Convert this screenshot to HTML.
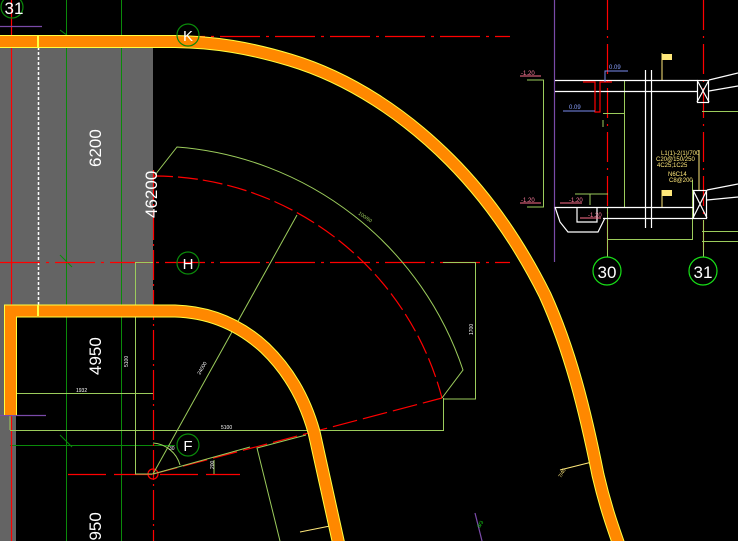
<!DOCTYPE html>
<html><head><meta charset="utf-8"><style>
html,body{margin:0;padding:0;background:#000;width:738px;height:541px;overflow:hidden}
svg{display:block}
text{font-family:"Liberation Sans",sans-serif}
</style></head><body>
<svg width="738" height="541" viewBox="0 0 738 541" xmlns="http://www.w3.org/2000/svg">
<rect width="738" height="541" fill="#000"/>
<rect x="0" y="46" width="153" height="260" fill="#646464"/>
<rect x="0" y="306" width="16" height="235" fill="#646464"/>
<rect x="16" y="316" width="137" height="100" fill="#000"/>
<g stroke="#0a8a0a" stroke-width="1">
<line x1="66.5" y1="0" x2="66.5" y2="541"/>
<line x1="121.5" y1="0" x2="121.5" y2="541"/>
<line x1="10" y1="445.5" x2="175" y2="445.5"/>
<line x1="60" y1="435" x2="72" y2="447"/>
<line x1="60" y1="255" x2="72" y2="267"/>
<line x1="60" y1="30" x2="68" y2="36"/>
</g>
<line x1="38.5" y1="47" x2="38.5" y2="315" stroke="#fff" stroke-width="1.5" stroke-dasharray="3,2"/>
<g stroke="#f00" stroke-width="1.2" fill="none">
<line x1="11.5" y1="0" x2="11.5" y2="541"/>
<line x1="0" y1="36.5" x2="510" y2="36.5" stroke-dasharray="40,6,3,6"/>
<line x1="0" y1="262.5" x2="510" y2="262.5" stroke-dasharray="40,6,3,6"/>
<line x1="68" y1="474.5" x2="240" y2="474.5" stroke-dasharray="38,8"/>
<line x1="153.5" y1="170" x2="153.5" y2="541" stroke-dasharray="30,4,2,4"/>
<path d="M153,176 A298,298 0 0 1 442,398" stroke-dasharray="20,5"/>
<line x1="153" y1="474" x2="442" y2="398" stroke-dasharray="25,6"/>
<circle cx="153" cy="474" r="5"/>
<line x1="607.5" y1="0" x2="607.5" y2="257" stroke-dasharray="30,6,2,6"/>
<line x1="703.5" y1="0" x2="703.5" y2="257" stroke-dasharray="30,6,2,6"/>
</g>
<g stroke="#9ccc5c" stroke-width="1" fill="none">
<path d="M155,175 L177,147 A328,328 0 0 1 463,370 L442,398"/>
<line x1="153" y1="474" x2="297" y2="215"/>
<polyline points="443,262.5 475.5,262.5 475.5,399 443,399"/>
<polyline points="10,430.5 443.5,430.5 443.5,398"/>
<polyline points="153,262.5 135.5,262.5 135.5,474 153,474"/>
<line x1="16" y1="393.5" x2="153" y2="393.5"/>
<line x1="10" y1="415" x2="10" y2="430"/>
<polyline points="306,435 257,448 280,541"/>
<line x1="153" y1="474" x2="250" y2="447"/>
<path d="M153,443 A30,30 0 0 1 180,465"/>
<line x1="214" y1="460" x2="214" y2="474"/>
<polyline points="527,80 543.5,80 543.5,207 527,207"/>
<line x1="624.5" y1="80" x2="624.5" y2="207"/>
<line x1="603" y1="113.5" x2="624" y2="113.5"/>
<line x1="603" y1="120" x2="603" y2="127"/>
<line x1="575" y1="194" x2="608" y2="194"/>
<line x1="590" y1="194" x2="590" y2="205"/>
<polyline points="607,239.5 692.5,239.5 692.5,180"/>
<line x1="702" y1="111.5" x2="738" y2="111.5"/>
<line x1="702" y1="231.5" x2="738" y2="231.5"/>
<line x1="702" y1="241.5" x2="738" y2="241.5"/>
<line x1="607.5" y1="207" x2="607.5" y2="257"/>
<line x1="703.5" y1="220" x2="703.5" y2="257"/>
</g>
<g stroke="#7a4aa8" stroke-width="1.2">
<line x1="0" y1="26.5" x2="42" y2="26.5"/>
<line x1="0" y1="415.5" x2="46" y2="415.5"/>
<line x1="554.5" y1="0" x2="554.5" y2="262"/>
<line x1="475" y1="513" x2="482" y2="541"/>
</g>
<g stroke="#fff" stroke-width="1.2" fill="none">
<line x1="555" y1="80.5" x2="697" y2="80.5"/>
<line x1="555" y1="91.5" x2="697" y2="91.5"/>
<line x1="555" y1="207.5" x2="693" y2="207.5"/>
<line x1="603" y1="218.5" x2="693" y2="218.5"/>
<line x1="645.5" y1="70" x2="645.5" y2="228"/>
<line x1="651.5" y1="70" x2="651.5" y2="228"/>
<rect x="697.5" y="80.5" width="11" height="22"/>
<path d="M697,80 L709,102 M709,80 L697,102"/>
<rect x="693.5" y="190.5" width="13" height="28"/>
<path d="M693,190 L707,218 M707,190 L693,218"/>
<path d="M709,80 L738,73 M709,91 L738,86 M707,190 L738,184 M707,200 L738,197"/>
<path d="M555,207 L560,222 L568,232 L598,232 L605,218"/>
<path d="M577,207 L577,222 L597,222 L597,207"/>
</g>
<g stroke="#ff6e8a" stroke-width="1" fill="none">
<line x1="520" y1="76" x2="541" y2="76"/>
<line x1="520" y1="203" x2="541" y2="203"/>
<line x1="560" y1="203" x2="582" y2="203"/>
<line x1="580" y1="218" x2="601" y2="218"/>
</g>
<g stroke="#f00" stroke-width="1.2" fill="none">
<polyline points="583,82 595,82 595,112 600,112 600,82 612,82"/>
</g>
<g stroke="#7a8cf0" stroke-width="1" fill="none">
<polyline points="605,82 605,71 628,71"/>
<line x1="563" y1="111" x2="595" y2="111"/>
</g>
<g fill="#ff7e9e" font-size="6">
<text x="521" y="75">-1.20</text><text x="521" y="202">-1.20</text>
<text x="569" y="202">-1.20</text><text x="588" y="217">-1.20</text>
</g>
<g fill="#8aa0ff" font-size="6"><text x="609" y="69">0.09</text><text x="569" y="109">0.09</text></g>
<g fill="#ffe87a" font-size="6">
<text x="661" y="155">L1(1)-2(1)/700</text>
<text x="656" y="161">C20@150/250</text>
<text x="657" y="167">4C25;1C25</text>
<text x="668" y="176">N6C14</text>
<text x="669" y="182">C8@200</text>
<rect x="662" y="54" width="10" height="6"/>
<rect x="662" y="190" width="10" height="6"/>
</g>
<g stroke="#ffe87a"><line x1="662" y1="53" x2="662" y2="80"/><line x1="662" y1="190" x2="662" y2="207"/><line x1="699" y1="150" x2="699" y2="190"/>
<line x1="560" y1="470" x2="592" y2="462"/><line x1="300" y1="532" x2="330" y2="526"/></g>
<g fill="none" stroke-linejoin="miter">
<path d="M0,41.5 L175,41.5 C215,42 250,48 290,60 C350,78 405,115 450,160 C490,200 520,245 545,295 C570,350 585,410 598,475 C605,505 612,525 619,545" stroke="#ffff40" stroke-width="13"/>
<path d="M0,41.5 L175,41.5 C215,42 250,48 290,60 C350,78 405,115 450,160 C490,200 520,245 545,295 C570,350 585,410 598,475 C605,505 612,525 619,545" stroke="#ff8800" stroke-width="11"/>
<path d="M10.5,415 L10.5,311 L175,311 C210,312 240,325 265,348 C290,372 305,400 314,432 L339,545" stroke="#ffff40" stroke-width="13"/>
<path d="M10.5,415 L10.5,311 L175,311 C210,312 240,325 265,348 C290,372 305,400 314,432 L339,545" stroke="#ff8800" stroke-width="11"/>
</g>
<rect x="37" y="36" width="2" height="11" fill="#ffff40"/>
<rect x="37" y="305" width="2" height="11" fill="#ffff40"/>
<g fill="none" stroke="#0a8a0a" stroke-width="1.2">
<circle cx="188" cy="35" r="11"/><circle cx="188" cy="263" r="11"/><circle cx="188" cy="445" r="11"/>
<circle cx="12" cy="7" r="11"/>
</g>
<g fill="none" stroke="#18e018" stroke-width="1.2">
<circle cx="607" cy="271" r="14"/><circle cx="703" cy="271" r="14"/>
</g>
<g fill="#fff" font-size="15" text-anchor="middle">
<text x="188" y="41">K</text><text x="188" y="269">H</text><text x="188" y="451">F</text>
<text x="14" y="14" font-size="17">31</text>
<text x="607" y="278" font-size="17">30</text><text x="703" y="278" font-size="17">31</text>
</g>
<g fill="#fff" font-size="17">
<text transform="translate(101,167) rotate(-90)">6200</text>
<text transform="translate(157,218) rotate(-90)">46200</text>
<text transform="translate(101,375) rotate(-90)">4950</text>
<text transform="translate(101,550) rotate(-90)">4950</text>
</g>
<g fill="#fff" font-size="5">
<text x="76" y="392">1932</text>
<text transform="translate(128,367) rotate(-90)">5100</text>
<text x="221" y="429">5100</text>
<text transform="translate(200,375) rotate(-60)">24000</text>
<text transform="translate(473,335) rotate(-90)">1700</text>
<text x="169" y="450">30</text>
<text transform="translate(214,469) rotate(-90)">200</text>
</g>
<text transform="translate(358,214) rotate(35)" fill="#9ccc5c" font-size="5">100/60</text>
<text transform="translate(561,478) rotate(-60)" fill="#ffe87a" font-size="5">7/40</text>
<text transform="translate(480,528) rotate(-60)" fill="#18e018" font-size="5">8/3</text>
</svg>
</body></html>
